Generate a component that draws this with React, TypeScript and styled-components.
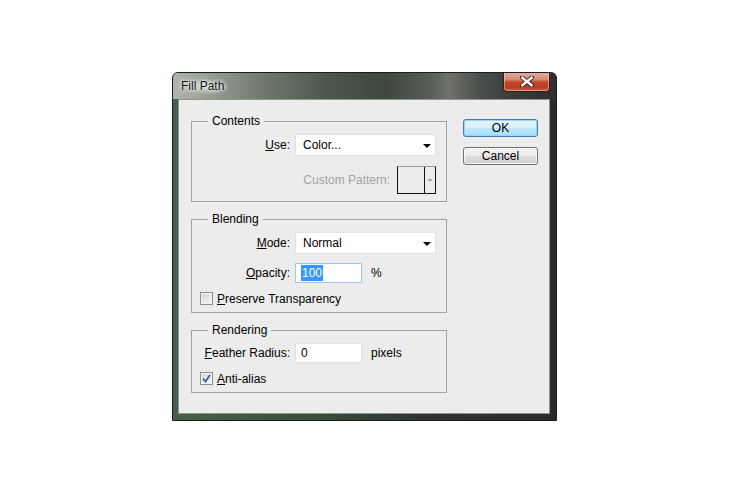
import styled, { createGlobalStyle } from "styled-components";

const GlobalStyle = createGlobalStyle`
  body {
    margin: 0;
    background: #ffffff;
    font-family: "Liberation Sans", Arial, sans-serif;
    font-size: 12px;
    color: #000;
  }
`;

const Window = styled.div`
  box-sizing: border-box;
  width: 385px;
  height: 349px;
  margin: 72px 0 0 172px;
  border: 1px solid #1b1e1b;
  border-radius: 6px 6px 0 0;
  overflow: hidden;
  display: flex;
  flex-direction: column;
  background: linear-gradient(90deg, #48604b 0%, #3d4d3f 35%, #303431 65%, #2a2a2a 100%);
`;

const TitleBar = styled.div`
  height: 26px;
  flex: none;
  display: flex;
  align-items: flex-start;
  justify-content: space-between;
  background: linear-gradient(
    90deg,
    #b0b4ae 0%,
    #969c93 10%,
    #6f786c 24%,
    #4d574d 40%,
    #3e473e 55%,
    #555a54 66%,
    #6e716c 72%,
    #4c504c 80%,
    #363936 90%,
    #2e302e 100%
  );
`;

const Title = styled.span`
  margin: 6px 0 0 7px;
  padding: 0 4px 0 1px;
  line-height: 15px;
  color: #111;
  text-shadow: 0 0 6px #e8ebe6, 0 0 4px #e8ebe6, 0 0 2px #eef0ec;
  background: radial-gradient(ellipse at center, rgba(225, 229, 222, 0.75) 0%, rgba(225, 229, 222, 0) 75%);
`;

const CloseButton = styled.div`
  box-sizing: border-box;
  width: 47px;
  height: 20px;
  margin: -1px 6px 0 0;
  border: 1px solid #3b1a12;
  border-top: none;
  border-radius: 0 0 4px 4px;
  display: flex;
  align-items: center;
  justify-content: center;
  background: linear-gradient(180deg, #e3b2a4 0%, #d58a74 40%, #c2482b 52%, #b83c22 80%, #c9624a 100%);
  box-shadow: inset 0 0 0 1px rgba(255, 220, 210, 0.45);
`;

const Body = styled.div`
  flex: 1;
  margin: 0 6px 6px 5px;
  border: 1px solid #8d978d;
  background: #ececec;
  display: flex;
  gap: 16px;
  padding: 14px 11px 0 12px;
`;

const Groups = styled.div`
  width: 256px;
  display: flex;
  flex-direction: column;
  gap: 10px;
`;

const Group = styled.fieldset<{ $gap?: number }>`
  margin: 0;
  padding: 6px 10px 7px 8px;
  border: 1px solid #a0a0a0;
  min-inline-size: 0;
  display: flex;
  flex-direction: column;
  gap: ${({ $gap }) => $gap ?? 9}px;
`;

const Legend = styled.legend`
  margin-left: 8px;
  padding: 0 4px;
  line-height: 14px;
`;

const Row = styled.div<{ $height: number }>`
  display: grid;
  grid-template-columns: 90px auto 1fr;
  align-items: center;
  column-gap: 5px;
  height: ${({ $height }) => $height}px;
`;

const FieldLabel = styled.span`
  text-align: right;
  white-space: nowrap;
`;

const Key = styled.span`
  text-decoration: underline;
`;

const Unit = styled.span`
  margin-left: 4px;
`;

const Select = styled.div`
  box-sizing: border-box;
  width: 141px;
  height: 22px;
  background: #fff;
  border: 1px solid #e2e2e2;
  display: flex;
  align-items: center;
  justify-content: space-between;
  padding: 0 4px 0 7px;
`;

const Arrow = styled.span`
  width: 0;
  height: 0;
  border-left: 4px solid transparent;
  border-right: 4px solid transparent;
  border-top: 4px solid #000;
  margin-top: 2px;
`;

const TextBox = styled.div<{ $focused?: boolean }>`
  box-sizing: border-box;
  width: 67px;
  height: 20px;
  background: #fff;
  border: 1px solid ${({ $focused }) => ($focused ? "#9cc6ea" : "#e2e2e2")};
  display: flex;
  align-items: center;
  padding: 0 0 0 5px;
`;

const Selected = styled.span`
  background: #3399ff;
  color: #fff;
  line-height: 16px;
  padding: 0 1px;
`;

const PatternRow = styled.div`
  height: 28px;
  display: flex;
  align-items: center;
  justify-content: flex-end;
  gap: 7px;
`;

const MutedLabel = styled.span`
  color: #a3a3a3;
`;

const PatternBox = styled.div`
  box-sizing: border-box;
  width: 39px;
  height: 28px;
  border: 1px solid #111;
  border-top-color: #9a9a9a;
  display: grid;
  grid-template-columns: 1fr 11px;
`;

const PatternArrow = styled.div`
  border-left: 1px solid #111;
  display: flex;
  align-items: center;
  justify-content: center;
  &::after {
    content: "";
    border-left: 3px solid transparent;
    border-right: 3px solid transparent;
    border-top: 3px solid #a8a8a8;
  }
`;

const CheckRow = styled.label`
  height: 13px;
  display: flex;
  align-items: center;
  gap: 4px;
`;

const Box = styled.span`
  box-sizing: border-box;
  width: 13px;
  height: 13px;
  border: 1px solid #8e8f8f;
  background: linear-gradient(135deg, #d4d4d4 0%, #e6e6e6 50%, #f4f4f4 100%);
  box-shadow: inset 0 0 0 1px #f4f4f4;
  display: flex;
  align-items: center;
  justify-content: center;
`;

const Buttons = styled.div`
  width: 76px;
  padding-top: 5px;
  display: flex;
  flex-direction: column;
  gap: 10px;
`;

const Button = styled.div<{ $primary?: boolean }>`
  box-sizing: border-box;
  height: 18px;
  border: 1px solid ${({ $primary }) => ($primary ? "#3c7fb1" : "#707070")};
  border-radius: 3px;
  display: flex;
  align-items: center;
  justify-content: center;
  background: ${({ $primary }) =>
    $primary
      ? "linear-gradient(180deg, #e8f6fd 0%, #d8effc 48%, #bee6fd 52%, #a9dbf6 100%)"
      : "linear-gradient(180deg, #f3f3f3 0%, #ebebeb 48%, #dddddd 52%, #cfcfcf 100%)"};
  box-shadow: inset 0 0 0 1px ${({ $primary }) => ($primary ? "#9fd3f3" : "#f8f8f8")};
`;

const CloseGlyph = () => (
  <svg width="14" height="11" viewBox="0 0 14 11">
    <path d="M2 1.5 L12 9.5 M12 1.5 L2 9.5" stroke="#3a1a14" strokeWidth="4.2" strokeLinecap="square" />
    <path d="M2.3 1.8 L11.7 9.2 M11.7 1.8 L2.3 9.2" stroke="#ffffff" strokeWidth="2.4" strokeLinecap="square" />
  </svg>
);

const Check = () => (
  <svg width="9" height="9" viewBox="0 0 9 9">
    <path d="M1 4.5 L3.5 7.5 L8 1" fill="none" stroke="#3f58a0" strokeWidth="1.8" />
  </svg>
);

export default function App() {
  return (
    <>
      <GlobalStyle />
      <Window>
        <TitleBar>
          <Title>Fill Path</Title>
          <CloseButton>
            <CloseGlyph />
          </CloseButton>
        </TitleBar>
        <Body>
          <Groups>
            <Group $gap={10}>
              <Legend>Contents</Legend>
              <Row $height={22}>
                <FieldLabel>
                  <Key>U</Key>se:
                </FieldLabel>
                <Select>
                  Color...
                  <Arrow />
                </Select>
              </Row>
              <PatternRow>
                <MutedLabel>Custom Pattern:</MutedLabel>
                <PatternBox>
                  <span />
                  <PatternArrow />
                </PatternBox>
              </PatternRow>
            </Group>

            <Group>
              <Legend>Blending</Legend>
              <Row $height={22}>
                <FieldLabel>
                  <Key>M</Key>ode:
                </FieldLabel>
                <Select>
                  Normal
                  <Arrow />
                </Select>
              </Row>
              <Row $height={20}>
                <FieldLabel>
                  <Key>O</Key>pacity:
                </FieldLabel>
                <TextBox $focused>
                  <Selected>100</Selected>
                </TextBox>
                <Unit>%</Unit>
              </Row>
              <CheckRow>
                <Box />
                <span>
                  <Key>P</Key>reserve Transparency
                </span>
              </CheckRow>
            </Group>

            <Group>
              <Legend>Rendering</Legend>
              <Row $height={20}>
                <FieldLabel>
                  <Key>F</Key>eather Radius:
                </FieldLabel>
                <TextBox>0</TextBox>
                <Unit>pixels</Unit>
              </Row>
              <CheckRow>
                <Box>
                  <Check />
                </Box>
                <span>
                  <Key>A</Key>nti-alias
                </span>
              </CheckRow>
            </Group>
          </Groups>

          <Buttons>
            <Button $primary>OK</Button>
            <Button>Cancel</Button>
          </Buttons>
        </Body>
      </Window>
    </>
  );
}
